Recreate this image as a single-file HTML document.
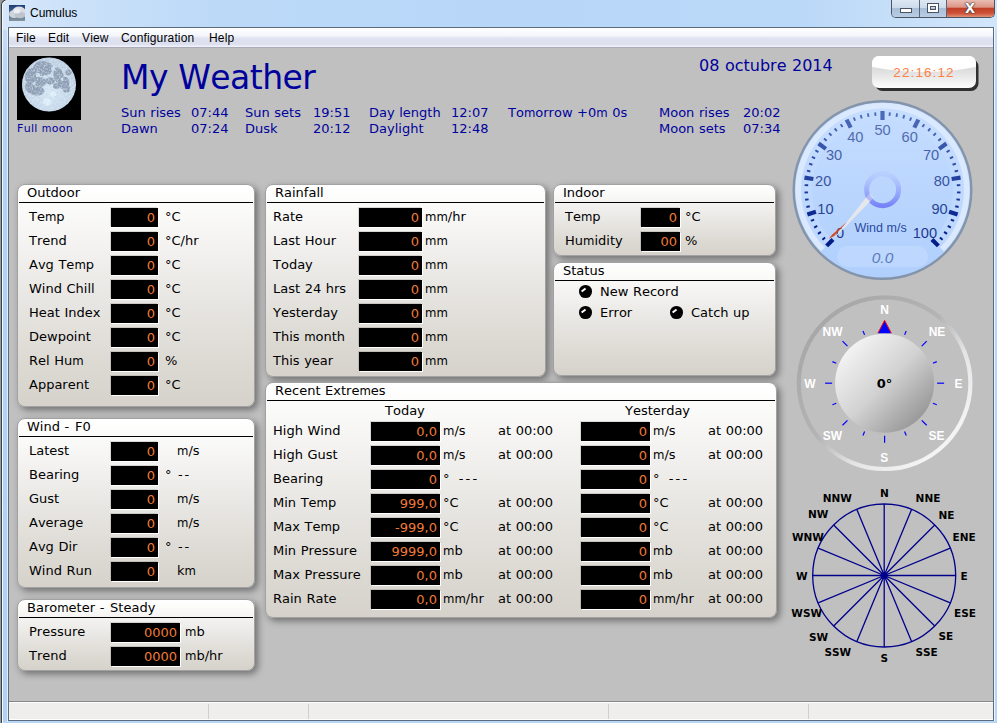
<!DOCTYPE html>
<html><head><meta charset="utf-8"><title>Cumulus</title>
<style>
html,body{margin:0;padding:0;}
body{width:997px;height:723px;overflow:hidden;position:relative;background:#c0c0c0;font-family:'DejaVu Sans','Liberation Sans',sans-serif;font-size:13px;color:#000;font-kerning:none;}
.abs{position:absolute;}
.t{position:absolute;white-space:nowrap;line-height:16px;height:16px;word-spacing:0.45px;}
.hd{color:#00009c;font-size:13px;}
.panel{position:absolute;box-sizing:border-box;border:1px solid #a2a2a2;border-radius:8px;
 background:linear-gradient(#ffffff 0%,#fbfbfa 10%,#f3f2f0 28%,#e7e5e1 55%,#dcd9d3 82%,#d6d2cb 100%);
 box-shadow:3px 3px 7px 0px rgba(0,0,0,0.42);}
.pl{position:absolute;height:1px;background:#000;}
.led{position:absolute;box-sizing:border-box;background:#000;height:19px;box-shadow:1px 1px 0 #fff,-1px -1px 0 rgba(0,0,0,0.13);
 color:#f07a35;text-align:right;font-size:13px;line-height:19px;padding-right:3px;}
.m{font-stretch:condensed;}
.dot{position:absolute;width:12.6px;height:12.6px;border-radius:6.3px;background:#000;}
.dot:after{content:"";position:absolute;left:2.2px;top:3.6px;width:5px;height:1.7px;background:#fff;transform:rotate(-38deg);}
</style></head>
<body>
<div class="abs" id="frame" style="left:0;top:0;width:997px;height:723px;background:linear-gradient(90deg,#d6e7fa 0%,#cbe1f9 8%,#bcd9f8 22%,#b8d7f8 50%,#bad8f8 80%,#c6dff9 90%,#d2e6fb 100%);"></div>
<div class="abs" style="left:0;top:0;width:1px;height:723px;background:#9a9a9a;"></div>
<div class="abs" style="left:1px;top:8px;width:1px;height:715px;background:#3b424c;"></div>
<div class="abs" style="left:2px;top:8px;width:1px;height:715px;background:#f4f9fe;"></div>
<div class="abs" style="left:3px;top:30px;width:4px;height:693px;background:linear-gradient(#c4dcf8 0%,#b2d3f8 8%,#b0d2f8 100%);"></div>
<div class="abs" style="left:995px;top:30px;width:2px;height:693px;background:linear-gradient(#c8dff9 0%,#b6d6f9 10%,#b6d6f9 100%);"></div>
<div class="abs" style="left:3px;top:721px;width:994px;height:2px;background:#b7d5f6;"></div>
<div class="abs" style="left:8px;top:27px;width:986px;height:694px;background:#5b6b7d;"></div>
<div class="abs" style="left:994px;top:27px;width:1px;height:694px;background:#eef5fd;"></div>
<div class="abs" style="left:7px;top:27px;width:1px;height:695px;background:#e4effb;"></div>
<div class="abs" id="client" style="left:9px;top:28px;width:984px;height:692px;background:#c0c0c0;"></div>
<div class="abs" style="left:9px;top:28px;width:984px;height:20px;background:linear-gradient(#ffffff 0%,#f4f6fb 40%,#dfe3f1 55%,#dcdfee 85%,#f3f4fa 100%);border-bottom:1px solid #a9abb8;box-sizing:border-box;"></div>
<div class="t" style="left:16px;top:30px;font-family:'Liberation Sans','DejaVu Sans',sans-serif;font-size:12px;letter-spacing:0.15px;">File</div>
<div class="t" style="left:48px;top:30px;font-family:'Liberation Sans','DejaVu Sans',sans-serif;font-size:12px;letter-spacing:0.15px;">Edit</div>
<div class="t" style="left:82px;top:30px;font-family:'Liberation Sans','DejaVu Sans',sans-serif;font-size:12px;letter-spacing:0.15px;">View</div>
<div class="t" style="left:121px;top:30px;font-family:'Liberation Sans','DejaVu Sans',sans-serif;font-size:12px;letter-spacing:0.15px;">Configuration</div>
<div class="t" style="left:209px;top:30px;font-family:'Liberation Sans','DejaVu Sans',sans-serif;font-size:12px;letter-spacing:0.15px;">Help</div>
<div class="t" style="left:30px;top:5px;font-family:'Liberation Sans','DejaVu Sans',sans-serif;font-size:12px;">Cumulus</div>
<svg class="abs" style="left:9px;top:5px" width="16" height="16" viewBox="0 0 16 16">
<defs><linearGradient id="sky" x1="0" y1="0" x2="0" y2="1"><stop offset="0" stop-color="#1d3a78"/><stop offset="0.6" stop-color="#56789f"/><stop offset="0.85" stop-color="#6f8aa0"/><stop offset="1" stop-color="#8f9693"/></linearGradient></defs>
<rect width="16" height="16" fill="url(#sky)"/>
<ellipse cx="10" cy="6.5" rx="6.5" ry="5" fill="#d9dce2"/><ellipse cx="5" cy="9" rx="5" ry="4" fill="#d0d4db"/><ellipse cx="11" cy="10" rx="5.5" ry="3.3" fill="#bfc4cc"/><ellipse cx="8" cy="6" rx="3.5" ry="2.5" fill="#eceef2"/>
</svg>
<svg class="abs" style="left:0;top:0" width="9" height="9" viewBox="0 0 9 9">
<path d="M0,0 L5.2,0 A6.5,6.5 0 0 0 1,6 L1,9 L0,9 Z" fill="#9a9a9a"/>
<path d="M1.5,9 L1.5,6 A6,6 0 0 1 5.6,0" fill="none" stroke="#3b424c" stroke-width="1.1"/>
<path d="M2.5,9 L2.5,6.4 A5,5 0 0 1 6.4,1" fill="none" stroke="#f4f9fe" stroke-width="1"/>
</svg>
<div class="abs" style="left:891px;top:0;width:104px;height:18px;box-sizing:border-box;border:1px solid #4b5563;border-top:none;border-radius:0 0 5px 5px;overflow:hidden;background:#c5d6ea;">
<div class="abs" style="left:0;top:0;width:27px;height:17px;background:linear-gradient(#dde8f4 0%,#cddbeb 45%,#a9bfd9 50%,#b9cde4 100%);border-right:1px solid #5a6575;"></div>
<div class="abs" style="left:28px;top:0;width:26px;height:17px;background:linear-gradient(#dde8f4 0%,#cddbeb 45%,#a9bfd9 50%,#b9cde4 100%);border-right:1px solid #5a6575;"></div>
<div class="abs" style="left:55px;top:0;width:48px;height:17px;background:linear-gradient(#e9bdb3 0%,#dc9484 42%,#c13f26 50%,#cc5238 78%,#e39176 100%);"></div>
<div class="abs" style="left:8px;top:8px;width:10px;height:3px;background:#fff;border:1px solid #4a5360;box-sizing:content-box;"></div>
<div class="abs" style="left:36px;top:4px;width:6px;height:4px;border:2px solid #fff;outline:1px solid #4a5360;box-shadow:inset 0 0 0 1px #4a5360;"></div>
<div class="abs" style="left:69px;top:-2px;width:18px;height:18px;font-family:'Liberation Sans','DejaVu Sans',sans-serif;font-weight:bold;font-size:18px;line-height:18px;text-align:center;color:#fff;text-shadow:0 0 1px #3a3a3a,0 0 1px #3a3a3a,0 0 2px #3a3a3a;">x</div>
</div>
<div class="abs" style="left:9px;top:701px;width:984px;height:1px;background:#868686;"></div>
<div class="abs" style="left:9px;top:702px;width:984px;height:18px;background:#f0eeed;border-top:1px solid #fff;border-bottom:1px solid #fff;box-sizing:border-box;"></div>
<div class="abs" style="left:208px;top:704px;width:1px;height:15px;background:#d0cfce;"></div>
<div class="abs" style="left:308px;top:704px;width:1px;height:15px;background:#d0cfce;"></div>
<div class="abs" style="left:608px;top:704px;width:1px;height:15px;background:#d0cfce;"></div>
<div class="abs" style="left:808px;top:704px;width:1px;height:15px;background:#d0cfce;"></div>
<svg class="abs" style="left:17px;top:56px" width="64" height="64" viewBox="0 0 64 64">
<defs><radialGradient id="mg" cx="0.5" cy="0.62" r="0.6"><stop offset="0" stop-color="#d4e6f5"/><stop offset="1" stop-color="#bccfe2"/></radialGradient>
<clipPath id="mc"><circle cx="32" cy="28.5" r="27"/></clipPath>
<filter id="mn" x="0" y="0" width="100%" height="100%"><feTurbulence type="fractalNoise" baseFrequency="0.55" numOctaves="2" seed="7"/><feColorMatrix type="matrix" values="0 0 0 0 0.86  0 0 0 0 0.92  0 0 0 0 0.97  2.6 0 0 0 -1.15"/></filter>
<filter id="md" x="0" y="0" width="100%" height="100%"><feTurbulence type="fractalNoise" baseFrequency="0.5" numOctaves="2" seed="23"/><feColorMatrix type="matrix" values="0 0 0 0 0.55  0 0 0 0 0.62  0 0 0 0 0.71  0 2.6 0 0 -1.3"/></filter></defs>
<rect width="64" height="64" fill="#000"/>
<circle cx="32" cy="28.5" r="27" fill="url(#mg)"/>
<g fill="#8d9eb5" clip-path="url(#mc)">
<ellipse cx="26" cy="12.5" rx="10" ry="7.5"/><ellipse cx="15" cy="21" rx="7" ry="9"/><ellipse cx="13" cy="31" rx="5" ry="6"/>
<ellipse cx="20" cy="35" rx="7.5" ry="4.5"/><ellipse cx="23" cy="26" rx="6" ry="5"/><ellipse cx="33" cy="25" rx="5" ry="3.5"/>
<ellipse cx="41.5" cy="19.5" rx="5" ry="8.5" transform="rotate(-15 41.5 19.5)"/><ellipse cx="47" cy="27" rx="5.5" ry="6.5"/>
<circle cx="51.5" cy="16.5" r="3"/><ellipse cx="49.5" cy="33" rx="3.5" ry="4"/><ellipse cx="40" cy="30" rx="4" ry="3"/>
</g>
<g fill="#c9dcec" clip-path="url(#mc)"><circle cx="21" cy="19" r="2.2"/><circle cx="28" cy="21" r="2"/><circle cx="17" cy="27.5" r="1.6"/><circle cx="36" cy="13" r="2"/><circle cx="45" cy="23" r="1.5"/></g>
<g fill="#deeefa" clip-path="url(#mc)"><circle cx="30" cy="46" r="4"/><circle cx="36" cy="38" r="3"/></g>
<rect x="5" y="1.5" width="54" height="54" filter="url(#md)" clip-path="url(#mc)" opacity="0.55"/>
<rect x="5" y="1.5" width="54" height="54" filter="url(#mn)" clip-path="url(#mc)" opacity="0.6"/>
</svg>
<div class="t hd" style="left:17px;top:121px;font-size:11px;letter-spacing:0.3px;">Full <span class="m">m</span>oon</div>
<div class="t hd" style="left:121px;top:58px;font-size:33px;letter-spacing:-0.55px;line-height:40px;height:40px;">My Weather</div>
<div class="t hd" style="left:699px;top:56px;font-size:16px;line-height:20px;height:20px;">08 octubre 2014</div>
<div class="t hd" style="left:121px;top:105px;">Sun rises</div>
<div class="t hd" style="left:121px;top:121px;">Dawn</div>
<div class="t hd" style="left:191px;top:105px;">07:44</div>
<div class="t hd" style="left:191px;top:121px;">07:24</div>
<div class="t hd" style="left:245px;top:105px;">Sun sets</div>
<div class="t hd" style="left:245px;top:121px;">Dusk</div>
<div class="t hd" style="left:313px;top:105px;">19:51</div>
<div class="t hd" style="left:313px;top:121px;">20:12</div>
<div class="t hd" style="left:369px;top:105px;">Day length</div>
<div class="t hd" style="left:369px;top:121px;">Daylight</div>
<div class="t hd" style="left:451px;top:105px;">12:07</div>
<div class="t hd" style="left:451px;top:121px;">12:48</div>
<div class="t hd" style="left:508px;top:105px;">To<span class="m">m</span>orrow +0<span class="m">m</span> 0s</div>
<div class="t hd" style="left:659px;top:105px;">Moon rises</div>
<div class="t hd" style="left:659px;top:121px;">Moon sets</div>
<div class="t hd" style="left:743px;top:105px;">20:02</div>
<div class="t hd" style="left:743px;top:121px;">07:34</div>
<svg class="abs" style="left:872px;top:56px" width="110" height="38" viewBox="0 0 110 38">
<defs><linearGradient id="ckg" x1="0" y1="0" x2="0" y2="1"><stop offset="0" stop-color="#ffffff"/><stop offset="0.4" stop-color="#dcdcdc"/><stop offset="0.7" stop-color="#ececec"/><stop offset="1" stop-color="#fdfdfd"/></linearGradient>
<clipPath id="ckc"><rect x="0" y="0" width="104" height="32" rx="7"/></clipPath></defs>
<rect x="3" y="3" width="103.5" height="32" rx="7.5" fill="#303030"/>
<rect x="0" y="0" width="104" height="32" rx="7" fill="url(#ckg)"/>
<ellipse cx="52" cy="-20" rx="100" ry="36" fill="#ffffff" clip-path="url(#ckc)"/>
</svg>
<div class="t" style="left:872px;top:65px;width:104px;text-align:center;font-family:'Liberation Sans','DejaVu Sans',sans-serif;font-size:13.5px;letter-spacing:1.1px;color:#ff7f45;">22:16:12</div>
<div class="panel" style="left:17px;top:184px;width:238px;height:223px;"></div>
<div class="pl" style="left:19px;top:202px;width:234px;"></div>
<div class="t " style="left:27px;top:185px;">Outdoor</div>
<div class="t " style="left:29px;top:209px;">Te<span class="m">m</span>p</div>
<div class="led" style="left:111px;top:208px;width:47px;">0</div>
<div class="t " style="left:165px;top:209px;">°C</div>
<div class="t " style="left:29px;top:233px;">Trend</div>
<div class="led" style="left:111px;top:232px;width:47px;">0</div>
<div class="t " style="left:165px;top:233px;">°C/hr</div>
<div class="t " style="left:29px;top:257px;">Avg Te<span class="m">m</span>p</div>
<div class="led" style="left:111px;top:256px;width:47px;">0</div>
<div class="t " style="left:165px;top:257px;">°C</div>
<div class="t " style="left:29px;top:281px;">Wind Chill</div>
<div class="led" style="left:111px;top:280px;width:47px;">0</div>
<div class="t " style="left:165px;top:281px;">°C</div>
<div class="t " style="left:29px;top:305px;">Heat Index</div>
<div class="led" style="left:111px;top:304px;width:47px;">0</div>
<div class="t " style="left:165px;top:305px;">°C</div>
<div class="t " style="left:29px;top:329px;">Dewpoint</div>
<div class="led" style="left:111px;top:328px;width:47px;">0</div>
<div class="t " style="left:165px;top:329px;">°C</div>
<div class="t " style="left:29px;top:353px;">Rel Hu<span class="m">m</span></div>
<div class="led" style="left:111px;top:352px;width:47px;">0</div>
<div class="t " style="left:165px;top:353px;">%</div>
<div class="t " style="left:29px;top:377px;">Apparent</div>
<div class="led" style="left:111px;top:376px;width:47px;">0</div>
<div class="t " style="left:165px;top:377px;">°C</div>
<div class="panel" style="left:17px;top:418px;width:238px;height:170px;"></div>
<div class="pl" style="left:19px;top:436px;width:234px;"></div>
<div class="t " style="left:27px;top:419px;">Wind <span style="letter-spacing:1.2px">-</span> F0</div>
<div class="t " style="left:29px;top:443px;">Latest</div>
<div class="led" style="left:111px;top:442px;width:47px;">0</div>
<div class="t " style="left:177px;top:443px;"><span class="m">m</span>/s</div>
<div class="t " style="left:29px;top:467px;">Bearing</div>
<div class="led" style="left:111px;top:466px;width:47px;">0</div>
<div class="t " style="left:165px;top:467px;">°&nbsp;<span style="letter-spacing:1.6px;margin-left:2px">--</span></div>
<div class="t " style="left:29px;top:491px;">Gust</div>
<div class="led" style="left:111px;top:490px;width:47px;">0</div>
<div class="t " style="left:177px;top:491px;"><span class="m">m</span>/s</div>
<div class="t " style="left:29px;top:515px;">Average</div>
<div class="led" style="left:111px;top:514px;width:47px;">0</div>
<div class="t " style="left:177px;top:515px;"><span class="m">m</span>/s</div>
<div class="t " style="left:29px;top:539px;">Avg Dir</div>
<div class="led" style="left:111px;top:538px;width:47px;">0</div>
<div class="t " style="left:165px;top:539px;">°&nbsp;<span style="letter-spacing:1.6px;margin-left:2px">--</span></div>
<div class="t " style="left:29px;top:563px;">Wind Run</div>
<div class="led" style="left:111px;top:562px;width:47px;">0</div>
<div class="t " style="left:177px;top:563px;">k<span class="m">m</span></div>
<div class="panel" style="left:17px;top:599px;width:238px;height:72px;"></div>
<div class="pl" style="left:19px;top:617px;width:234px;"></div>
<div class="t " style="left:27px;top:600px;">Baro<span class="m">m</span>eter <span style="letter-spacing:1.2px">-</span> Steady</div>
<div class="t " style="left:29px;top:624px;">Pressure</div>
<div class="led" style="left:111px;top:623px;width:69px;">0000</div>
<div class="t " style="left:185px;top:624px;"><span class="m">m</span>b</div>
<div class="t " style="left:29px;top:648px;">Trend</div>
<div class="led" style="left:111px;top:647px;width:69px;">0000</div>
<div class="t " style="left:185px;top:648px;"><span class="m">m</span>b/hr</div>
<div class="panel" style="left:265px;top:184px;width:281px;height:193px;"></div>
<div class="pl" style="left:267px;top:202px;width:277px;"></div>
<div class="t " style="left:275px;top:185px;">Rainfall</div>
<div class="t " style="left:273px;top:209px;">Rate</div>
<div class="led" style="left:359px;top:208px;width:63px;">0</div>
<div class="t " style="left:425px;top:209px;"><span class="m">mm</span>/hr</div>
<div class="t " style="left:273px;top:233px;">Last Hour</div>
<div class="led" style="left:359px;top:232px;width:63px;">0</div>
<div class="t " style="left:425px;top:233px;"><span class="m">mm</span></div>
<div class="t " style="left:273px;top:257px;">Today</div>
<div class="led" style="left:359px;top:256px;width:63px;">0</div>
<div class="t " style="left:425px;top:257px;"><span class="m">mm</span></div>
<div class="t " style="left:273px;top:281px;">Last 24 hrs</div>
<div class="led" style="left:359px;top:280px;width:63px;">0</div>
<div class="t " style="left:425px;top:281px;"><span class="m">mm</span></div>
<div class="t " style="left:273px;top:305px;">Yesterday</div>
<div class="led" style="left:359px;top:304px;width:63px;">0</div>
<div class="t " style="left:425px;top:305px;"><span class="m">mm</span></div>
<div class="t " style="left:273px;top:329px;">This <span class="m">m</span>onth</div>
<div class="led" style="left:359px;top:328px;width:63px;">0</div>
<div class="t " style="left:425px;top:329px;"><span class="m">mm</span></div>
<div class="t " style="left:273px;top:353px;">This year</div>
<div class="led" style="left:359px;top:352px;width:63px;">0</div>
<div class="t " style="left:425px;top:353px;"><span class="m">mm</span></div>
<div class="panel" style="left:553px;top:184px;width:223px;height:72px;"></div>
<div class="pl" style="left:555px;top:202px;width:219px;"></div>
<div class="t " style="left:563px;top:185px;">Indoor</div>
<div class="t " style="left:565px;top:209px;">Te<span class="m">m</span>p</div>
<div class="led" style="left:641px;top:208px;width:39px;">0</div>
<div class="t " style="left:685px;top:209px;">°C</div>
<div class="t " style="left:565px;top:233px;">Hu<span class="m">m</span>idity</div>
<div class="led" style="left:641px;top:232px;width:39px;">00</div>
<div class="t " style="left:685px;top:233px;">%</div>
<div class="panel" style="left:553px;top:262px;width:223px;height:114px;"></div>
<div class="pl" style="left:555px;top:280px;width:219px;"></div>
<div class="t " style="left:563px;top:263px;">Status</div>
<div class="dot" style="left:579.1px;top:285.2px;"></div>
<div class="t " style="left:600px;top:284px;">New Record</div>
<div class="dot" style="left:579.1px;top:306.2px;"></div>
<div class="t " style="left:600px;top:305px;">Error</div>
<div class="dot" style="left:670.1px;top:306.2px;"></div>
<div class="t " style="left:691px;top:305px;">Catch up</div>
<div class="panel" style="left:265px;top:382px;width:512px;height:236px;"></div>
<div class="pl" style="left:267px;top:400px;width:508px;"></div>
<div class="t " style="left:275px;top:383px;">Recent Extre<span class="m">m</span>es</div>
<div class="t " style="left:385px;top:403px;">Today</div>
<div class="t " style="left:625px;top:403px;">Yesterday</div>
<div class="t " style="left:273px;top:423px;">High Wind</div>
<div class="led" style="left:371px;top:422px;width:69px;">0,0</div>
<div class="t " style="left:443px;top:423px;"><span class="m">m</span>/s</div>
<div class="led" style="left:581px;top:422px;width:69px;">0</div>
<div class="t " style="left:653px;top:423px;"><span class="m">m</span>/s</div>
<div class="t " style="left:498px;top:423px;">at 00:00</div>
<div class="t " style="left:708px;top:423px;">at 00:00</div>
<div class="t " style="left:273px;top:447px;">High Gust</div>
<div class="led" style="left:371px;top:446px;width:69px;">0,0</div>
<div class="t " style="left:443px;top:447px;"><span class="m">m</span>/s</div>
<div class="led" style="left:581px;top:446px;width:69px;">0</div>
<div class="t " style="left:653px;top:447px;"><span class="m">m</span>/s</div>
<div class="t " style="left:498px;top:447px;">at 00:00</div>
<div class="t " style="left:708px;top:447px;">at 00:00</div>
<div class="t " style="left:273px;top:471px;">Bearing</div>
<div class="led" style="left:371px;top:470px;width:69px;">0</div>
<div class="t " style="left:443px;top:471px;">°&nbsp; <span style="letter-spacing:2.2px">---</span></div>
<div class="led" style="left:581px;top:470px;width:69px;">0</div>
<div class="t " style="left:653px;top:471px;">°&nbsp; <span style="letter-spacing:2.2px">---</span></div>
<div class="t " style="left:273px;top:495px;">Min Te<span class="m">m</span>p</div>
<div class="led" style="left:371px;top:494px;width:69px;">999,0</div>
<div class="t " style="left:443px;top:495px;">°C</div>
<div class="led" style="left:581px;top:494px;width:69px;">0</div>
<div class="t " style="left:653px;top:495px;">°C</div>
<div class="t " style="left:498px;top:495px;">at 00:00</div>
<div class="t " style="left:708px;top:495px;">at 00:00</div>
<div class="t " style="left:273px;top:519px;">Max Te<span class="m">m</span>p</div>
<div class="led" style="left:371px;top:518px;width:69px;">-999,0</div>
<div class="t " style="left:443px;top:519px;">°C</div>
<div class="led" style="left:581px;top:518px;width:69px;">0</div>
<div class="t " style="left:653px;top:519px;">°C</div>
<div class="t " style="left:498px;top:519px;">at 00:00</div>
<div class="t " style="left:708px;top:519px;">at 00:00</div>
<div class="t " style="left:273px;top:543px;">Min Pressure</div>
<div class="led" style="left:371px;top:542px;width:69px;">9999,0</div>
<div class="t " style="left:443px;top:543px;"><span class="m">m</span>b</div>
<div class="led" style="left:581px;top:542px;width:69px;">0</div>
<div class="t " style="left:653px;top:543px;"><span class="m">m</span>b</div>
<div class="t " style="left:498px;top:543px;">at 00:00</div>
<div class="t " style="left:708px;top:543px;">at 00:00</div>
<div class="t " style="left:273px;top:567px;">Max Pressure</div>
<div class="led" style="left:371px;top:566px;width:69px;">0,0</div>
<div class="t " style="left:443px;top:567px;"><span class="m">m</span>b</div>
<div class="led" style="left:581px;top:566px;width:69px;">0</div>
<div class="t " style="left:653px;top:567px;"><span class="m">m</span>b</div>
<div class="t " style="left:498px;top:567px;">at 00:00</div>
<div class="t " style="left:708px;top:567px;">at 00:00</div>
<div class="t " style="left:273px;top:591px;">Rain Rate</div>
<div class="led" style="left:371px;top:590px;width:69px;">0,0</div>
<div class="t " style="left:443px;top:591px;"><span class="m">mm</span>/hr</div>
<div class="led" style="left:581px;top:590px;width:69px;">0</div>
<div class="t " style="left:653px;top:591px;"><span class="m">mm</span>/hr</div>
<div class="t " style="left:498px;top:591px;">at 00:00</div>
<div class="t " style="left:708px;top:591px;">at 00:00</div>
<svg class="abs" style="left:0;top:0;font-kerning:none" width="997" height="723" viewBox="0 0 997 723">
<defs>
<linearGradient id="wgf" x1="0" y1="0" x2="0" y2="1"><stop offset="0" stop-color="#c6ddff"/><stop offset="0.5" stop-color="#bad6fe"/><stop offset="1" stop-color="#b0cffd"/></linearGradient>
<linearGradient id="wgh" x1="0" y1="0" x2="0" y2="1"><stop offset="0" stop-color="#b4caff" stop-opacity="0.55"/><stop offset="1" stop-color="#7783f8"/></linearGradient>
<linearGradient id="cring" x1="0.15" y1="0.15" x2="0.85" y2="0.85"><stop offset="0" stop-color="#a8a8a8"/><stop offset="0.45" stop-color="#b4b4b4"/><stop offset="0.7" stop-color="#e4e4e4"/><stop offset="1" stop-color="#f4f4f4"/></linearGradient>
<linearGradient id="cdisc" x1="0.15" y1="0.15" x2="0.85" y2="0.85"><stop offset="0" stop-color="#f2f2f2"/><stop offset="0.5" stop-color="#d2d2d2"/><stop offset="1" stop-color="#9a9a9a"/></linearGradient>
</defs>
<circle cx="882.5" cy="190.0" r="88.8" fill="url(#wgf)" stroke="#8494aa" stroke-width="2.4"/>
<path d="M822.96,249.54 A84.2,84.2 0 1 1 942.04,249.54" fill="none" stroke="#dbe9ff" stroke-width="5.6"/>
<path d="M828.76,243.74 A76,76 0 1 1 936.24,243.74" fill="none" stroke="#c8ddff" stroke-width="11" opacity="0.45"/>
<rect x="837" y="246" width="91" height="21" rx="10.5" fill="#cfe2ff" opacity="0.4"/>
<line x1="833.00" y1="239.50" x2="826.64" y2="245.86" stroke="#021c88" stroke-width="4.2"/>
<line x1="825.10" y1="237.49" x2="822.40" y2="239.72" stroke="#021c88" stroke-width="1.9"/>
<line x1="820.88" y1="231.88" x2="817.99" y2="233.84" stroke="#031d89" stroke-width="1.9"/>
<line x1="817.22" y1="225.89" x2="814.15" y2="227.58" stroke="#07218b" stroke-width="1.9"/>
<line x1="814.13" y1="219.59" x2="810.92" y2="220.98" stroke="#0b268e" stroke-width="1.9"/>
<line x1="815.93" y1="211.63" x2="807.37" y2="214.41" stroke="#0f2a91" stroke-width="4.2"/>
<line x1="809.79" y1="206.25" x2="806.38" y2="207.02" stroke="#132f93" stroke-width="1.9"/>
<line x1="808.59" y1="199.34" x2="805.12" y2="199.78" stroke="#183396" stroke-width="1.9"/>
<line x1="808.04" y1="192.34" x2="804.54" y2="192.45" stroke="#1c3899" stroke-width="1.9"/>
<line x1="808.15" y1="185.32" x2="804.65" y2="185.10" stroke="#203d9c" stroke-width="1.9"/>
<line x1="813.36" y1="179.05" x2="804.47" y2="177.64" stroke="#24419f" stroke-width="4.2"/>
<line x1="810.34" y1="171.47" x2="806.95" y2="170.60" stroke="#2946a2" stroke-width="1.9"/>
<line x1="812.40" y1="164.76" x2="809.11" y2="163.58" stroke="#2d4aa4" stroke-width="1.9"/>
<line x1="815.09" y1="158.28" x2="811.92" y2="156.79" stroke="#314fa7" stroke-width="1.9"/>
<line x1="818.37" y1="152.08" x2="815.36" y2="150.29" stroke="#3553aa" stroke-width="1.9"/>
<line x1="825.87" y1="148.86" x2="818.59" y2="143.56" stroke="#3856ac" stroke-width="4.2"/>
<line x1="826.62" y1="140.73" x2="823.99" y2="138.42" stroke="#3c5bae" stroke-width="1.9"/>
<line x1="831.50" y1="135.69" x2="829.11" y2="133.14" stroke="#3f5eb0" stroke-width="1.9"/>
<line x1="836.84" y1="131.13" x2="834.69" y2="128.37" stroke="#4261b2" stroke-width="1.9"/>
<line x1="842.58" y1="127.10" x2="840.71" y2="124.14" stroke="#4564b4" stroke-width="1.9"/>
<line x1="850.72" y1="127.63" x2="846.63" y2="119.61" stroke="#4665b5" stroke-width="4.2"/>
<line x1="855.07" y1="120.73" x2="853.79" y2="117.48" stroke="#4868b6" stroke-width="1.9"/>
<line x1="861.72" y1="118.46" x2="860.74" y2="115.10" stroke="#4a6ab7" stroke-width="1.9"/>
<line x1="868.54" y1="116.82" x2="867.88" y2="113.38" stroke="#4b6bb8" stroke-width="1.9"/>
<line x1="875.49" y1="115.83" x2="875.16" y2="112.35" stroke="#4c6bb8" stroke-width="1.9"/>
<line x1="882.50" y1="120.00" x2="882.50" y2="111.00" stroke="#4b6ab8" stroke-width="4.2"/>
<line x1="889.51" y1="115.83" x2="889.84" y2="112.35" stroke="#4c6bb8" stroke-width="1.9"/>
<line x1="896.46" y1="116.82" x2="897.12" y2="113.38" stroke="#4b6bb8" stroke-width="1.9"/>
<line x1="903.28" y1="118.46" x2="904.26" y2="115.10" stroke="#4a6ab7" stroke-width="1.9"/>
<line x1="909.93" y1="120.73" x2="911.21" y2="117.48" stroke="#4868b6" stroke-width="1.9"/>
<line x1="914.28" y1="127.63" x2="918.37" y2="119.61" stroke="#4665b5" stroke-width="4.2"/>
<line x1="922.42" y1="127.10" x2="924.29" y2="124.14" stroke="#4564b4" stroke-width="1.9"/>
<line x1="928.16" y1="131.13" x2="930.31" y2="128.37" stroke="#4261b2" stroke-width="1.9"/>
<line x1="933.50" y1="135.69" x2="935.89" y2="133.14" stroke="#3f5eb0" stroke-width="1.9"/>
<line x1="938.38" y1="140.73" x2="941.01" y2="138.42" stroke="#3c5bae" stroke-width="1.9"/>
<line x1="939.13" y1="148.86" x2="946.41" y2="143.56" stroke="#3856ac" stroke-width="4.2"/>
<line x1="946.63" y1="152.08" x2="949.64" y2="150.29" stroke="#3553aa" stroke-width="1.9"/>
<line x1="949.91" y1="158.28" x2="953.08" y2="156.79" stroke="#314fa7" stroke-width="1.9"/>
<line x1="952.60" y1="164.76" x2="955.89" y2="163.58" stroke="#2d4aa4" stroke-width="1.9"/>
<line x1="954.66" y1="171.47" x2="958.05" y2="170.60" stroke="#2946a2" stroke-width="1.9"/>
<line x1="951.64" y1="179.05" x2="960.53" y2="177.64" stroke="#24419f" stroke-width="4.2"/>
<line x1="956.85" y1="185.32" x2="960.35" y2="185.10" stroke="#203d9c" stroke-width="1.9"/>
<line x1="956.96" y1="192.34" x2="960.46" y2="192.45" stroke="#1c3899" stroke-width="1.9"/>
<line x1="956.41" y1="199.34" x2="959.88" y2="199.78" stroke="#183396" stroke-width="1.9"/>
<line x1="955.21" y1="206.25" x2="958.62" y2="207.02" stroke="#132f93" stroke-width="1.9"/>
<line x1="949.07" y1="211.63" x2="957.63" y2="214.41" stroke="#0f2a91" stroke-width="4.2"/>
<line x1="950.87" y1="219.59" x2="954.08" y2="220.98" stroke="#0b268e" stroke-width="1.9"/>
<line x1="947.78" y1="225.89" x2="950.85" y2="227.58" stroke="#07218b" stroke-width="1.9"/>
<line x1="944.12" y1="231.88" x2="947.01" y2="233.84" stroke="#031d89" stroke-width="1.9"/>
<line x1="939.90" y1="237.49" x2="942.60" y2="239.72" stroke="#021c88" stroke-width="1.9"/>
<line x1="932.00" y1="239.50" x2="938.36" y2="245.86" stroke="#021c88" stroke-width="4.2"/>
<text x="840.1" y="237.6" text-anchor="middle" font-family="'Liberation Sans','DejaVu Sans',sans-serif" font-size="14.6" fill="#1d398d">0</text>
<text x="825.4" y="213.7" text-anchor="middle" font-family="'Liberation Sans','DejaVu Sans',sans-serif" font-size="14.6" fill="#2a4695">10</text>
<text x="823.2" y="185.8" text-anchor="middle" font-family="'Liberation Sans','DejaVu Sans',sans-serif" font-size="14.6" fill="#3a549f">20</text>
<text x="834.0" y="159.9" text-anchor="middle" font-family="'Liberation Sans','DejaVu Sans',sans-serif" font-size="14.6" fill="#4862a8">30</text>
<text x="855.3" y="141.7" text-anchor="middle" font-family="'Liberation Sans','DejaVu Sans',sans-serif" font-size="14.6" fill="#516cae">40</text>
<text x="882.5" y="135.2" text-anchor="middle" font-family="'Liberation Sans','DejaVu Sans',sans-serif" font-size="14.6" fill="#556fb0">50</text>
<text x="909.7" y="141.7" text-anchor="middle" font-family="'Liberation Sans','DejaVu Sans',sans-serif" font-size="14.6" fill="#516cae">60</text>
<text x="931.0" y="159.9" text-anchor="middle" font-family="'Liberation Sans','DejaVu Sans',sans-serif" font-size="14.6" fill="#4862a8">70</text>
<text x="941.8" y="185.8" text-anchor="middle" font-family="'Liberation Sans','DejaVu Sans',sans-serif" font-size="14.6" fill="#3a549f">80</text>
<text x="939.6" y="213.7" text-anchor="middle" font-family="'Liberation Sans','DejaVu Sans',sans-serif" font-size="14.6" fill="#2a4695">90</text>
<text x="924.9" y="237.6" text-anchor="middle" font-family="'Liberation Sans','DejaVu Sans',sans-serif" font-size="14.6" fill="#1d398d">100</text>
<text x="880.6" y="232.3" text-anchor="middle" font-family="'Liberation Sans','DejaVu Sans',sans-serif" font-size="12.5" fill="#2a4a9f">Wind m/s</text>
<text x="882.5" y="263" text-anchor="middle" font-family="'Liberation Sans','DejaVu Sans',sans-serif" font-style="italic" font-size="15.5" fill="#5d7dbd">0.0</text>
<circle cx="882.6" cy="189.7" r="16" fill="none" stroke="url(#wgh)" stroke-width="5"/>
<polygon points="869.58,193.29 874.08,197.25 870.23,201.18 866.17,197.62" fill="#e9e9ee" opacity="0.4"/>
<polygon points="866.17,197.62 870.23,201.18 832.60,239.90" fill="#e7e7e9" opacity="0.96"/>
<polygon points="846.98,222.02 832.26,234.38 828.85,238.71 834.06,235.96" fill="#d4471a"/>
<circle cx="884.6" cy="383.2" r="85.8" fill="none" stroke="url(#cring)" stroke-width="4.2"/>
<circle cx="884.6" cy="383.2" r="49.5" fill="url(#cdisc)"/>
<line x1="904.61" y1="334.88" x2="906.22" y2="331.00" stroke="#0000ff" stroke-width="1.2"/>
<line x1="921.72" y1="346.08" x2="926.67" y2="341.13" stroke="#0000ff" stroke-width="1.2"/>
<line x1="932.92" y1="363.19" x2="936.80" y2="361.58" stroke="#0000ff" stroke-width="1.2"/>
<line x1="937.10" y1="383.20" x2="944.10" y2="383.20" stroke="#0000ff" stroke-width="1.2"/>
<line x1="932.92" y1="403.21" x2="936.80" y2="404.82" stroke="#0000ff" stroke-width="1.2"/>
<line x1="921.72" y1="420.32" x2="926.67" y2="425.27" stroke="#0000ff" stroke-width="1.2"/>
<line x1="904.61" y1="431.52" x2="906.22" y2="435.40" stroke="#0000ff" stroke-width="1.2"/>
<line x1="884.60" y1="435.70" x2="884.60" y2="442.70" stroke="#0000ff" stroke-width="1.2"/>
<line x1="864.59" y1="431.52" x2="862.98" y2="435.40" stroke="#0000ff" stroke-width="1.2"/>
<line x1="847.48" y1="420.32" x2="842.53" y2="425.27" stroke="#0000ff" stroke-width="1.2"/>
<line x1="836.28" y1="403.21" x2="832.40" y2="404.82" stroke="#0000ff" stroke-width="1.2"/>
<line x1="832.10" y1="383.20" x2="825.10" y2="383.20" stroke="#0000ff" stroke-width="1.2"/>
<line x1="836.28" y1="363.19" x2="832.40" y2="361.58" stroke="#0000ff" stroke-width="1.2"/>
<line x1="847.48" y1="346.08" x2="842.53" y2="341.13" stroke="#0000ff" stroke-width="1.2"/>
<line x1="864.59" y1="334.88" x2="862.98" y2="331.00" stroke="#0000ff" stroke-width="1.2"/>
<polygon points="884.6,320.4 891.3000000000001,333.2 877.9,333.2" fill="#0000ff"/>
<polyline points="877.9,333.2 884.6,320.4 891.3000000000001,333.2" fill="none" stroke="#ff0000" stroke-width="1"/>
<text x="884.5" y="314.3" text-anchor="middle" font-family="'Liberation Sans','DejaVu Sans',sans-serif" font-weight="bold" font-size="12" fill="#ffffff">N</text>
<text x="937" y="336.3" text-anchor="middle" font-family="'Liberation Sans','DejaVu Sans',sans-serif" font-weight="bold" font-size="12" fill="#ffffff">NE</text>
<text x="958.4" y="388.3" text-anchor="middle" font-family="'Liberation Sans','DejaVu Sans',sans-serif" font-weight="bold" font-size="12" fill="#ffffff">E</text>
<text x="936.5" y="440.3" text-anchor="middle" font-family="'Liberation Sans','DejaVu Sans',sans-serif" font-weight="bold" font-size="12" fill="#ffffff">SE</text>
<text x="884.3" y="462.3" text-anchor="middle" font-family="'Liberation Sans','DejaVu Sans',sans-serif" font-weight="bold" font-size="12" fill="#ffffff">S</text>
<text x="832.5" y="440.3" text-anchor="middle" font-family="'Liberation Sans','DejaVu Sans',sans-serif" font-weight="bold" font-size="12" fill="#ffffff">SW</text>
<text x="810" y="388.3" text-anchor="middle" font-family="'Liberation Sans','DejaVu Sans',sans-serif" font-weight="bold" font-size="12" fill="#ffffff">W</text>
<text x="832.5" y="336.1" text-anchor="middle" font-family="'Liberation Sans','DejaVu Sans',sans-serif" font-weight="bold" font-size="12" fill="#ffffff">NW</text>
<text x="884.6" y="388.3" text-anchor="middle" font-family="'DejaVu Sans','Liberation Sans',sans-serif" font-weight="bold" font-size="13" fill="#000">0°</text>
<circle cx="884.2" cy="575.5" r="71.5" fill="none" stroke="#00008b" stroke-width="1.3"/>
<line x1="884.2" y1="575.5" x2="884.20" y2="504.00" stroke="#00008b" stroke-width="1.3"/>
<line x1="884.2" y1="575.5" x2="911.56" y2="509.44" stroke="#00008b" stroke-width="1.3"/>
<line x1="884.2" y1="575.5" x2="934.76" y2="524.94" stroke="#00008b" stroke-width="1.3"/>
<line x1="884.2" y1="575.5" x2="950.26" y2="548.14" stroke="#00008b" stroke-width="1.3"/>
<line x1="884.2" y1="575.5" x2="955.70" y2="575.50" stroke="#00008b" stroke-width="1.3"/>
<line x1="884.2" y1="575.5" x2="950.26" y2="602.86" stroke="#00008b" stroke-width="1.3"/>
<line x1="884.2" y1="575.5" x2="934.76" y2="626.06" stroke="#00008b" stroke-width="1.3"/>
<line x1="884.2" y1="575.5" x2="911.56" y2="641.56" stroke="#00008b" stroke-width="1.3"/>
<line x1="884.2" y1="575.5" x2="884.20" y2="647.00" stroke="#00008b" stroke-width="1.3"/>
<line x1="884.2" y1="575.5" x2="856.84" y2="641.56" stroke="#00008b" stroke-width="1.3"/>
<line x1="884.2" y1="575.5" x2="833.64" y2="626.06" stroke="#00008b" stroke-width="1.3"/>
<line x1="884.2" y1="575.5" x2="818.14" y2="602.86" stroke="#00008b" stroke-width="1.3"/>
<line x1="884.2" y1="575.5" x2="812.70" y2="575.50" stroke="#00008b" stroke-width="1.3"/>
<line x1="884.2" y1="575.5" x2="818.14" y2="548.14" stroke="#00008b" stroke-width="1.3"/>
<line x1="884.2" y1="575.5" x2="833.64" y2="524.94" stroke="#00008b" stroke-width="1.3"/>
<line x1="884.2" y1="575.5" x2="856.84" y2="509.44" stroke="#00008b" stroke-width="1.3"/>
<circle cx="884.2" cy="575.5" r="3.6" fill="#00008b"/>
<text x="884.5" y="496.90000000000003" text-anchor="middle" font-family="'DejaVu Sans','Liberation Sans',sans-serif" font-weight="bold" font-size="10.5" fill="#000">N</text>
<text x="915.6" y="502.0" text-anchor="start" font-family="'DejaVu Sans','Liberation Sans',sans-serif" font-weight="bold" font-size="10.5" fill="#000">NNE</text>
<text x="938.5" y="518.6999999999999" text-anchor="start" font-family="'DejaVu Sans','Liberation Sans',sans-serif" font-weight="bold" font-size="10.5" fill="#000">NE</text>
<text x="952.6" y="540.6999999999999" text-anchor="start" font-family="'DejaVu Sans','Liberation Sans',sans-serif" font-weight="bold" font-size="10.5" fill="#000">ENE</text>
<text x="960.6" y="579.6999999999999" text-anchor="start" font-family="'DejaVu Sans','Liberation Sans',sans-serif" font-weight="bold" font-size="10.5" fill="#000">E</text>
<text x="954.1" y="616.9" text-anchor="start" font-family="'DejaVu Sans','Liberation Sans',sans-serif" font-weight="bold" font-size="10.5" fill="#000">ESE</text>
<text x="938.5" y="640.1999999999999" text-anchor="start" font-family="'DejaVu Sans','Liberation Sans',sans-serif" font-weight="bold" font-size="10.5" fill="#000">SE</text>
<text x="915.4" y="656.0" text-anchor="start" font-family="'DejaVu Sans','Liberation Sans',sans-serif" font-weight="bold" font-size="10.5" fill="#000">SSE</text>
<text x="884.3" y="662.0999999999999" text-anchor="middle" font-family="'DejaVu Sans','Liberation Sans',sans-serif" font-weight="bold" font-size="10.5" fill="#000">S</text>
<text x="851.2" y="656.0" text-anchor="end" font-family="'DejaVu Sans','Liberation Sans',sans-serif" font-weight="bold" font-size="10.5" fill="#000">SSW</text>
<text x="828.1" y="640.8" text-anchor="end" font-family="'DejaVu Sans','Liberation Sans',sans-serif" font-weight="bold" font-size="10.5" fill="#000">SW</text>
<text x="822.1" y="616.9" text-anchor="end" font-family="'DejaVu Sans','Liberation Sans',sans-serif" font-weight="bold" font-size="10.5" fill="#000">WSW</text>
<text x="807.5" y="579.6999999999999" text-anchor="end" font-family="'DejaVu Sans','Liberation Sans',sans-serif" font-weight="bold" font-size="10.5" fill="#000">W</text>
<text x="823.9" y="540.6999999999999" text-anchor="end" font-family="'DejaVu Sans','Liberation Sans',sans-serif" font-weight="bold" font-size="10.5" fill="#000">WNW</text>
<text x="828.3" y="518.0999999999999" text-anchor="end" font-family="'DejaVu Sans','Liberation Sans',sans-serif" font-weight="bold" font-size="10.5" fill="#000">NW</text>
<text x="851.8" y="502.0" text-anchor="end" font-family="'DejaVu Sans','Liberation Sans',sans-serif" font-weight="bold" font-size="10.5" fill="#000">NNW</text>
</svg>
</body></html>
